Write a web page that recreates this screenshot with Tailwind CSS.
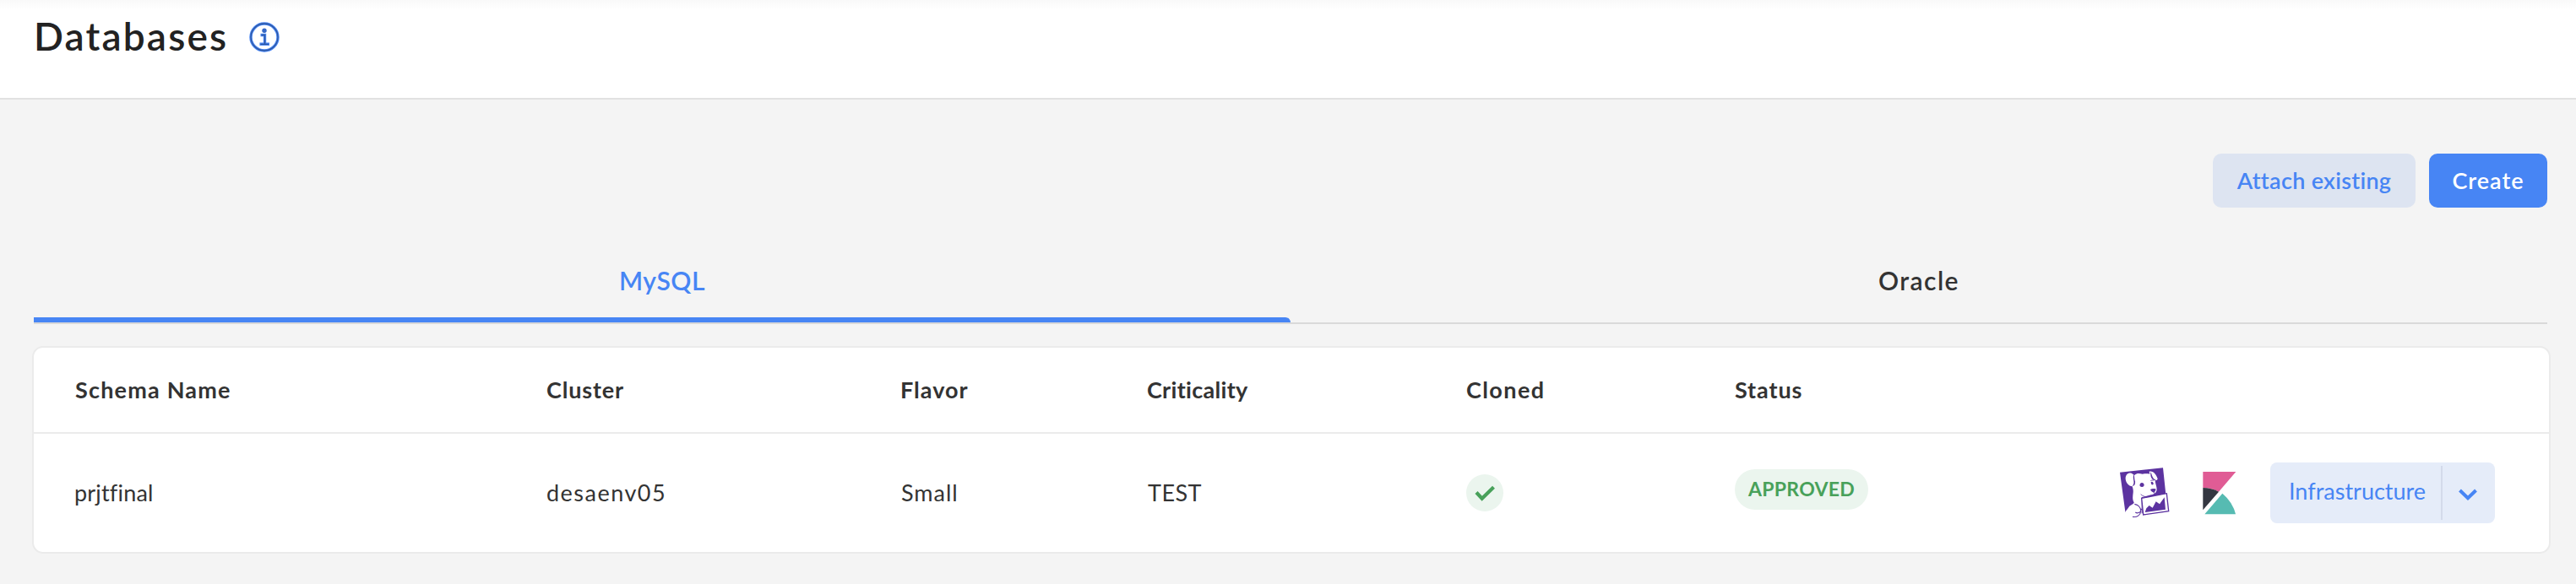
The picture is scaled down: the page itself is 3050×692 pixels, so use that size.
<!DOCTYPE html>
<html lang="en">
<head>
<meta charset="utf-8">
<title>Databases</title>
<script src="https://cdn.jsdelivr.net/npm/@tailwindcss/browser@4"></script>
</head>
<body class="w-[3050px] h-[692px] overflow-hidden bg-[#f4f4f4] text-[#333] font-['Lato',sans-serif] [font-variant-ligatures:none]">
<header class="h-[118px] bg-white bg-linear-to-b from-[#f9f9f9] to-white to-10% border-b-2 border-[#e1e1e1] pl-10">
  <div class="flex items-center h-[88px]">
    <h1 class="text-[46px] leading-none pb-[3px] font-semibold text-[#222] tracking-[2.16px]">Databases</h1>
    <svg class="ml-[25px] size-9" viewBox="0 0 36 36" fill="none">
      <g stroke="#4785f4" stroke-width="3.4"><circle cx="18" cy="18" r="16"/><path d="M13.500 15.500h5v10.800M12.400 26.300h11.600"/></g>
      <circle cx="18" cy="10.300" r="2.700" fill="#3468c8"/>
      <g stroke="#2f57a0" stroke-width="1.300"><circle cx="18" cy="18" r="16"/><path d="M14.500 15.500h4v10.800M13.400 26.300h9.600"/></g>
    </svg>
  </div>
</header>
<main class="pl-[38px] pr-[30px] pt-16">
  <div class="flex justify-end gap-4 pr-1 text-[27px] font-semibold">
    <button class="w-60 h-16 rounded-[10px] bg-[#dde4f1] text-[#4785f4] tracking-[0.3px]">Attach existing</button>
    <button class="w-35 h-16 rounded-[10px] bg-[#4785f4] text-white tracking-[1px]">Create</button>
  </div>
  <nav class="mt-[42px] ml-[2px] w-[2976px] h-24 grid grid-cols-2 border-b-2 border-[#d9d9d9] text-[30px] font-semibold text-center leading-[88px]">
    <a class="flex flex-col text-[#4785f4] tracking-[0.5px]">
      <span>MySQL</span>
      <span class="h-1.5 rounded-tr-md bg-[#4785f4]"></span>
    </a>
    <a class="tracking-[1.4px]">Oracle</a>
  </nav>
  <section class="mt-[26px] h-[246px] bg-white border-2 border-[#ebebeb] rounded-[13px] text-[27px]">
    <div class="h-[102px] pl-12 pr-16 border-b-2 border-[#ebebeb] grid grid-cols-[559px_419px_292px_378px_318px_200px_1fr] items-center font-bold">
      <span class="tracking-[1.2px] pl-px">Schema Name</span>
      <span class="tracking-[0.83px]">Cluster</span>
      <span class="tracking-[1px]">Flavor</span>
      <span class="tracking-[0.3px]">Criticality</span>
      <span class="tracking-[1.4px]">Cloned</span>
      <span class="tracking-[0.9px]">Status</span>
      <span></span>
    </div>
    <div class="h-[140px] pl-12 pr-16 grid grid-cols-[559px_419px_292px_378px_318px_200px_1fr] items-center">
      <span class="tracking-[0.18px]">prjtfinal</span>
      <span class="tracking-[1.48px]">desaenv05</span>
      <span class="tracking-[1px] pl-px">Small</span>
      <span class="tracking-[0.44px] pl-px">TEST</span>
      <span class="size-11 rounded-full bg-[#ebf5ee] flex items-center justify-center">
        <svg class="size-11" viewBox="0 0 44 44" fill="none" stroke="#48a15a" stroke-width="4.200"><path d="M12 21.500l6.700 7.200L32.500 15.300"/></svg>
      </span>
      <span class="mb-2 w-[158px] h-12 rounded-full bg-[#ebf5ee] text-[#48a15a] text-[23px] font-bold tracking-[0.3px] flex items-center justify-center pb-0.5">APPROVED</span>
      <div class="flex items-center justify-end gap-10">
        <svg class="w-[61px] h-[62px] overflow-visible" viewBox="21 24 183 186">
          <path fill="#5c33a0" d="M30 44L183 28L193 122L110 137V190L50 191Z"/>
          <!-- head and body -->
          <path fill="#fff" d="M50 68C49 54 58 44 71 47L82 54C92 45 100 49 110 50C119 49 127 48 136 50L134 41C149 38 159 52 164 67C163 72 159 74 155 72C155 83 161 94 161 105C160 118 149 124 137 125L107 133V192L46 193C47 184 56 176 62 167C66 161 80 157 80 151C73 141 76 126 77 116C78 107 76 101 74 94C60 92 52 82 50 68Z"/>
          <!-- ears -->
          <path fill="#5c33a0" d="M76 48C84 54 80 66 84 76C85 86 82 92 74 93C82 85 79 76 78 68C76 60 80 54 76 48ZM138 42C144 48 143 58 148 64C151 69 155 71 159 72C151 75 144 69 141 62C138 55 140 48 138 42Z"/>
          <!-- eyes and nose -->
          <path fill="#5c33a0" d="M102 84C107 79 114 81 116 88C116 95 111 97 105 95C100 94 99 90 102 84ZM140 79C144 75 150 79 149 86C145 91 140 88 140 79ZM138 105C144 101 151 102 157 103C158 109 155 113 150 116C144 114 140 110 138 105Z"/>
          <path fill="none" stroke="#5c33a0" stroke-width="2.500" d="M104 122C111 129 120 132 127 130C135 127 141 125 147 125C153 123 154 119 151 114M139 74C143 71 147 72 149 74"/>
          <!-- chart held in the paws -->
          <path fill="#fff" stroke="#5c33a0" stroke-width="4" d="M107 136L196 119L203 182L113 195Z"/>
          <path fill="#5c33a0" d="M119 186L124 172L134 162L146 170L158 148L171 157L188 133L192 176Z"/>
          <path fill="#fff" d="M61 181C65 160 88 154 101 170C109 184 101 203 82 204C66 203 58 193 61 181Z"/>
          <path fill="none" stroke="#5c33a0" stroke-width="3.500" d="M82 157C95 159 104 169 104 182C103 196 91 205 75 202M103 174L110 178M85 186C90 190 97 188 102 184"/>
        </svg>
        <svg class="w-10 h-[52px]" viewBox="384 114 120 156">
          <path fill="#e05c95" d="M385 117H502L441 188Q415 174 385 174Z"/>
          <path fill="#343741" d="M385 174Q415 174 441 188L385 253Z"/>
          <path fill="#56bbb2" d="M391 268L454 194Q491 225 501 268Z"/>
        </svg>
        <button class="w-[266px] h-18 rounded-lg bg-[#e5ecf9] text-[#4785f4] flex items-center">
          <span class="w-[202px] pl-[22px] pb-1 text-left">Infrastructure</span>
          <span class="w-0.5 h-16 bg-[#d3daea]"></span>
          <svg class="ml-[18px] mt-1 w-6 h-4" viewBox="0 0 24 16" fill="none" stroke="#4785f4" stroke-width="4"><path d="M2.500 3l9.500 9.300L21.500 3"/></svg>
        </button>
      </div>
    </div>
  </section>
</main>
</body>
</html>
